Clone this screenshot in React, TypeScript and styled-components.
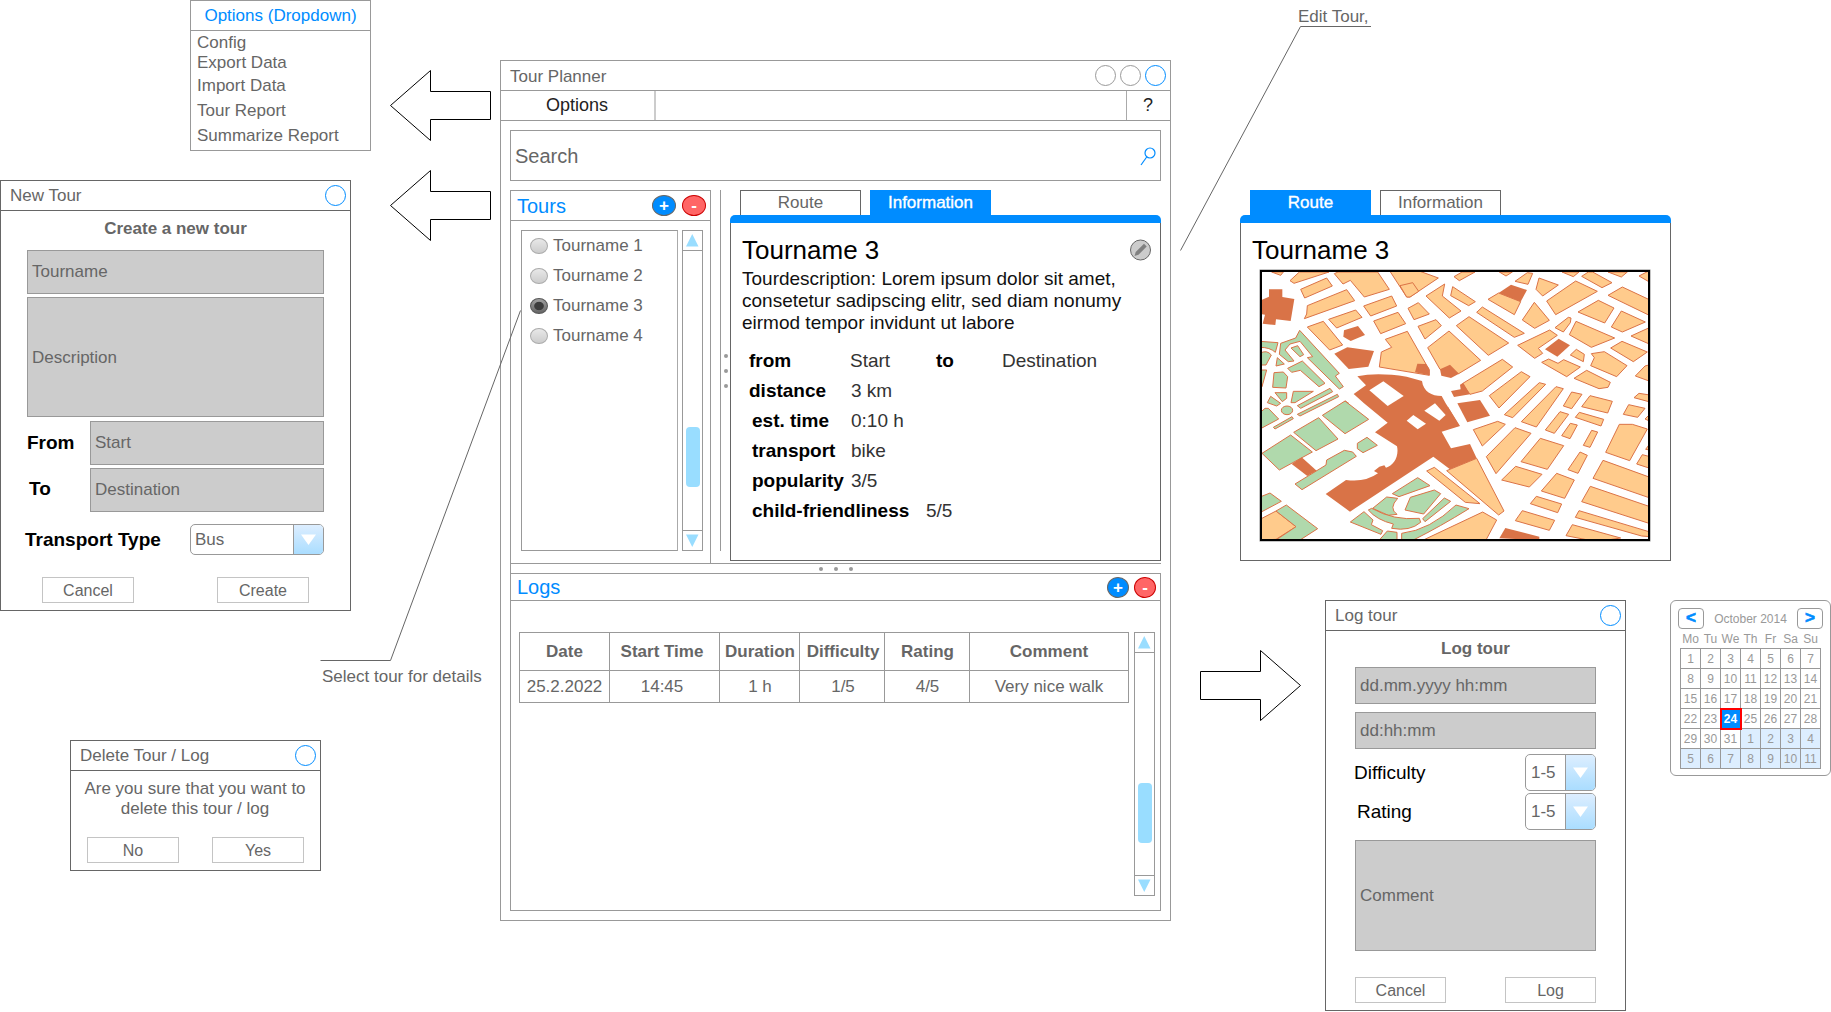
import React from "react";
import styled, { createGlobalStyle, css } from "styled-components";

const BLUE = "#008cff";
const LINE = "#999999";
const DARK = "#666666";

const GlobalStyle = createGlobalStyle`
  *, *::before, *::after { box-sizing: border-box; }
  body {
    margin: 0;
    background: #fff;
    font-family: "Liberation Sans", Arial, Helvetica, sans-serif;
    font-size: 17px;
    line-height: 20px;
    color: ${DARK};
  }
`;

const Canvas = styled.main`
  position: relative;
  width: 1831px;
  height: 1012px;
  overflow: hidden;
  background: #fff;
`;

interface PlaceProps { $x: number; $y: number; $w?: number; $h?: number }

const place = css<PlaceProps>`
  position: absolute;
  left: ${(p) => p.$x}px;
  top: ${(p) => p.$y}px;
  ${(p) => p.$w && `width: ${p.$w}px;`}
  ${(p) => p.$h && `height: ${p.$h}px;`}
`;

const Window = styled.section<PlaceProps & { $line?: string }>`
  ${place}
  display: flex;
  flex-direction: column;
  border: 1px solid ${(p) => p.$line ?? DARK};
  background: #fff;
`;

const Placed = styled.div<PlaceProps>`
  ${place}
  display: flex;
`;

const Overlay = styled.svg<PlaceProps>`
  ${place}
  pointer-events: none;
  overflow: visible;
`;

const Note = styled.span<PlaceProps>`
  ${place}
  white-space: nowrap;
`;

/* ---------- window chrome ---------- */

const TitleBar = styled.header<{ $line?: string }>`
  display: flex;
  align-items: center;
  flex: none;
  gap: 4px;
  height: 30px;
  padding: 0 4px 0 9px;
  border-bottom: 1px solid ${(p) => p.$line ?? DARK};
`;

const BarTitle = styled.span<{ $drop?: number }>`
  flex: 1;
  padding-top: ${(p) => p.$drop ?? 0}px;
`;

const Ring = styled.i<{ $color: string }>`
  width: 21px;
  height: 21px;
  border: 1px solid ${(p) => p.$color};
  border-radius: 50%;
`;

/* ---------- options menu ---------- */

const MenuHead = styled.div`
  height: 30px;
  flex: none;
  line-height: 30px;
  text-align: center;
  color: ${BLUE};
  border-bottom: 1px solid ${LINE};
`;

const MenuItem = styled.div<{ $gap: number }>`
  margin-top: ${(p) => p.$gap}px;
  padding-left: 6px;
`;

/* ---------- form parts ---------- */

const Form = styled.div<{ $side: number }>`
  display: flex;
  flex-direction: column;
  padding: 8px ${(p) => p.$side}px 0;
`;

const FormTitle = styled.h2<{ $after: number }>`
  margin: 0 0 ${(p) => p.$after}px;
  font-size: 17px;
  line-height: 20px;
  text-align: center;
`;

const Field = styled.div<{ $h: number; $after?: number; $w?: number; $drop?: number }>`
  display: flex;
  align-items: center;
  flex: none;
  width: ${(p) => (p.$w ? `${p.$w}px` : "100%")};
  height: ${(p) => p.$h}px;
  margin-bottom: ${(p) => p.$after ?? 0}px;
  padding: ${(p) => p.$drop ?? 0}px 0 0 4px;
  border: 1px solid ${LINE};
  background: #cccccc;
`;

const FormRow = styled.div<{ $after?: number; $pull?: number }>`
  display: flex;
  align-items: center;
  justify-content: space-between;
  margin: 0 0 ${(p) => p.$after ?? 0}px ${(p) => p.$pull ?? 0}px;
`;

const Label = styled.span<{ $bold?: boolean; $lift?: number }>`
  padding-bottom: ${(p) => p.$lift ?? 0}px;
  font-size: 19px;
  line-height: 22px;
  font-weight: ${(p) => (p.$bold ? 700 : 400)};
  color: #000;
`;

const SelectBox = styled.div<{ $w: number; $h: number; $pad: number }>`
  display: flex;
  align-items: center;
  justify-content: space-between;
  width: ${(p) => p.$w}px;
  height: ${(p) => p.$h}px;
  padding-left: ${(p) => p.$pad}px;
  border: 1px solid ${LINE};
  border-radius: 5px;
  overflow: hidden;
`;

const SelectText = styled.span`padding-top: 1px;`;

const SelectArrow = styled.div`
  display: flex;
  align-items: center;
  justify-content: center;
  width: 30px;
  height: 100%;
  border-left: 1px solid ${LINE};
  background: linear-gradient(#ddeeff, #aaddff);
`;

const Select = ({ text, w, h, pad }: { text: string; w: number; h: number; pad: number }) => (
  <SelectBox $w={w} $h={h} $pad={pad}>
    <SelectText>{text}</SelectText>
    <SelectArrow>
      <svg width="15" height="11" viewBox="0 0 15 11"><path d="M0 .5H15L7.5 11Z" fill="#fff" /></svg>
    </SelectArrow>
  </SelectBox>
);

const Actions = styled.div<{ $before: number; $side: number }>`
  display: flex;
  justify-content: space-between;
  margin-top: ${(p) => p.$before}px;
  padding: 0 ${(p) => p.$side}px;
`;

const Button = styled.button<{ $w?: number }>`
  width: ${(p) => p.$w ?? 92}px;
  height: 26px;
  padding: 2px 0 0;
  border: 1px solid #c4c4c4;
  background: #fff;
  color: ${DARK};
  font: 16px/22px "Liberation Sans", Arial, sans-serif;
`;

const Message = styled.p`
  margin: 8px 1px 0 0;
  text-align: center;
`;

/* ---------- main window ---------- */

const MenuBar = styled.nav`
  display: flex;
  flex: none;
  height: 30px;
  border-bottom: 1px solid ${LINE};
  font-size: 18px;
  line-height: 28px;
  color: #222;
  text-align: center;
`;
const MenuOptions = styled.div`width: 155px; padding-right: 1px; border-right: 2px solid #cccccc;`;
const MenuSpace = styled.div`flex: 1;`;
const MenuHelp = styled.div`width: 44px; padding-right: 1px; border-left: 1px solid #aaa;`;

const Body = styled.div`
  display: flex;
  flex-direction: column;
  flex: 1;
  padding: 9px;
`;

const SearchBox = styled.div`
  display: flex;
  align-items: center;
  justify-content: space-between;
  flex: none;
  height: 51px;
  margin-bottom: 9px;
  padding: 0 4px;
  border: 1px solid ${LINE};
  font-size: 20px;
`;

const Upper = styled.div`display: flex; flex: none; height: 373px;`;

const ToursPanel = styled.div`
  display: flex;
  flex-direction: column;
  width: 201px;
  margin-right: 9px;
  border: 1px solid ${LINE};
  border-bottom: 0;
`;

const PanelHead = styled.div<{ $h: number; $gap: number }>`
  display: flex;
  align-items: center;
  flex: none;
  gap: ${(p) => p.$gap}px;
  height: ${(p) => p.$h}px;
  padding: 0 4px 0 6px;
  border-bottom: 1px solid ${LINE};
`;

const PanelTitle = styled.h3`
  flex: 1;
  margin: 0;
  font-size: 20px;
  font-weight: 400;
  color: ${BLUE};
`;

const RoundButton = styled.span<{ $w: number; $danger?: boolean }>`
  display: flex;
  align-items: center;
  justify-content: center;
  width: ${(p) => p.$w}px;
  height: 21px;
  border: 1px solid ${(p) => (p.$danger ? "#cc0000" : DARK)};
  border-radius: 50%;
  background: ${(p) => (p.$danger ? "#ff6666" : BLUE)};
  color: #fff;
  font-size: 17px;
  font-weight: 700;
  line-height: 19px;
`;

const ToursBody = styled.div`display: flex; gap: 4px; padding: 9px 0 0 10px;`;

const List = styled.div`
  width: 157px;
  height: 321px;
  border: 1px solid ${LINE};
  border-right-color: #aaa;
`;

const ListItem = styled.div`
  display: flex;
  align-items: center;
  gap: 5px;
  height: 30px;
  padding-left: 8px;
`;

const Radio = styled.i<{ $on?: boolean }>`
  width: 18px;
  height: 16px;
  border: 1px solid ${(p) => (p.$on ? "#555" : "#aaa")};
  border-radius: 50%;
  background: ${(p) =>
    p.$on
      ? "radial-gradient(ellipse closest-side, #3c3c3c 0 54%, transparent 66%), linear-gradient(#a0a0a0, #666)"
      : "linear-gradient(#e8e8e8, #cccccc)"};
`;

const Scroll = styled.div<{ $h: number }>`
  display: flex;
  flex-direction: column;
  align-items: center;
  flex: none;
  width: 21px;
  height: ${(p) => p.$h}px;
  border: 1px solid ${LINE};
`;

const ScrollEnd = styled.div<{ $bottom?: boolean }>`
  display: flex;
  align-items: center;
  justify-content: center;
  flex: none;
  width: 100%;
  height: 20px;
  ${(p) => (p.$bottom ? "margin-top: auto; border-top" : "border-bottom")}: 1px solid ${LINE};
`;

const Thumb = styled.div<{ $offset: number }>`
  width: 14px;
  height: 60px;
  margin-top: ${(p) => p.$offset}px;
  border-radius: 4px;
  background: #99ddff;
`;

const Scrollbar = ({ h, offset }: { h: number; offset: number }) => (
  <Scroll $h={h}>
    <ScrollEnd><svg width="13" height="13"><path d="M0 12.5H12.5L6.25 0Z" fill="#99ddff" /></svg></ScrollEnd>
    <Thumb $offset={offset} />
    <ScrollEnd $bottom><svg width="13" height="13"><path d="M0 .5H12.5L6.25 13Z" fill="#99ddff" /></svg></ScrollEnd>
  </Scroll>
);

const VSplit = styled.div`
  display: flex;
  flex-direction: column;
  align-items: center;
  justify-content: center;
  gap: 11px;
  width: 10px;
  height: 361px;
  border-left: 1px solid ${LINE};
`;

const HSplit = styled.div`
  display: flex;
  align-items: center;
  justify-content: center;
  flex: none;
  gap: 11px;
  height: 10px;
  border: 1px solid ${LINE};
  border-width: 1px 0 0 1px;
`;

const Dot = styled.i`
  width: 4px;
  height: 4px;
  border-radius: 50%;
  background: ${LINE};
`;

/* ---------- tabs ---------- */

const TabPanel = styled.div`
  display: flex;
  flex-direction: column;
  width: 431px;
  height: 371px;
`;

const TabStrip = styled.div`
  display: flex;
  gap: 9px;
  height: 25px;
  padding-left: 10px;
`;

const Tab = styled.div<{ $active?: boolean }>`
  width: 121px;
  border: 1px solid ${(p) => (p.$active ? BLUE : DARK)};
  border-bottom: 0;
  background: ${(p) => (p.$active ? BLUE : "#fff")};
  color: ${(p) => (p.$active ? "#fff" : DARK)};
  -webkit-text-stroke: ${(p) => (p.$active ? "0.35px #fff" : "0")};
  line-height: 23px;
  text-align: center;
`;

const TabRule = styled.div`
  flex: none;
  height: 8px;
  border-radius: 5px 5px 0 0;
  background: ${BLUE};
`;

const TabBody = styled.div`
  flex: 1;
  padding: 12px 8px 0 11px;
  border: 1px solid ${DARK};
  border-top: 0;
`;

const TourHead = styled.div`
  display: flex;
  align-items: center;
  justify-content: space-between;
  height: 30px;
`;

const TourTitle = styled.h1`
  margin: 0;
  font-size: 26px;
  font-weight: 400;
  line-height: 30px;
  color: #000;
`;

const Description = styled.p`
  margin: 3px 0 12px;
  font-size: 19px;
  line-height: 22px;
  color: #111;
  white-space: nowrap;
`;

const Fact = styled.div<{ $indent: number }>`
  display: flex;
  align-items: center;
  height: 30px;
  padding-left: ${(p) => p.$indent}px;
  font-size: 19px;
`;
const FactName = styled.span<{ $w: number }>`
  width: ${(p) => p.$w}px;
  font-weight: 700;
  color: #000;
`;
const FactValue = styled.span<{ $w?: number }>`
  ${(p) => p.$w && `width: ${p.$w}px;`}
  color: #333;
`;

/* ---------- logs ---------- */

const LogsPanel = styled.div`
  display: flex;
  flex-direction: column;
  height: 338px;
  border: 1px solid ${LINE};
`;

const LogsBody = styled.div`
  display: flex;
  gap: 5px;
  padding: 31px 0 0 8px;
`;

const LogTable = styled.table`
  width: 610px;
  height: 71px;
  table-layout: fixed;
  border-collapse: collapse;
  line-height: 21px;
`;

const cell = css<{ $shift: number }>`
  padding: 0 ${(p) => Math.max(0, -p.$shift)}px 0 ${(p) => Math.max(0, p.$shift)}px;
  border: 1px solid ${LINE};
  text-align: center;
  white-space: nowrap;
`;
const HeadCell = styled.th<{ $shift: number }>`${cell} height: 38px;`;
const Cell = styled.td<{ $shift: number }>`${cell} height: 32px;`;

/* ---------- calendar ---------- */

const CalendarCard = styled.section<PlaceProps>`
  ${place}
  display: flex;
  flex-direction: column;
  align-items: center;
  padding-top: 7px;
  border: 1px solid ${LINE};
  border-radius: 6px;
  background: #fff;
  color: ${LINE};
  font-size: 12px;
`;

const CalendarHead = styled.div`
  display: flex;
  align-items: center;
  justify-content: space-between;
  width: 145px;
  height: 21px;
`;

const CalendarNav = styled.span`
  width: 26px;
  height: 21px;
  border: 1px solid ${LINE};
  border-radius: 4px;
  color: ${BLUE};
  font-size: 17px;
  font-weight: 700;
  line-height: 18px;
  text-align: center;
  -webkit-text-stroke: 0.7px ${BLUE};
`;

const WeekDays = styled.div`
  display: grid;
  grid-template-columns: repeat(7, 20px);
  margin: 0 0 -1px;
  line-height: 20px;
  text-align: center;
`;

const Days = styled.div`
  display: grid;
  grid-template-columns: repeat(7, 20px);
  grid-auto-rows: 20px;
  width: 141px;
  height: 121px;
  border: 1px solid ${LINE};
  border-width: 1px 0 0 1px;
`;

const Day = styled.span<{ $next?: boolean; $picked?: boolean }>`
  border: 1px solid ${LINE};
  border-width: 0 1px 1px 0;
  background: ${(p) => (p.$picked ? BLUE : p.$next ? "#ddeeff" : "#fff")};
  color: ${(p) => (p.$picked ? "#fff" : LINE)};
  font-weight: ${(p) => (p.$picked ? 700 : 400)};
  line-height: 20px;
  text-align: center;
  ${(p) => p.$picked && "position: relative; border-color: transparent; background-clip: padding-box; outline: 2px solid #ff0000; outline-offset: -1px;"}
`;

/* ---------- street map ---------- */

const MapFrame = styled.div`
  width: 390px;
  height: 271px;
  margin: 5px 0 0 8px;
  border: 2px solid #000;
  box-shadow: 0 0 0 0.5px #8a8a8a;
  svg { display: block; }
`;

const blocks = [
  "65,36 92,46 100,36", "120,62 148,36 237,36 132,70", "152,88 230,54 247,78 164,114",
  "172,137 290,89 314,122 163,176 170,162", "253,41 264,36 383,36 418,88 343,111 301,61 279,72",
  "236,178 317,150 336,172 260,204", "341,138 425,108 440,138 362,168", "371,183 444,157 467,191 392,221",
  "172,201 220,184 278,255 239,270", "420,34 510,34 565,54 480,111 470,111", "450,77 488,68 506,94 480,111 470,111",
  "528,108 584,72 577,108 633,153 598,174", "608,80 676,125 656,137 602,107", "474,145 505,128 538,162 492,179",
  "504,199 558,179 574,197 525,237", "619,197 657,170 776,249 715,286", "533,263 597,213 692,301 626,341 570,328",
  "406,238 472,214 538,330 538,346 388,321 394,276 425,262",
  "612,50 636,36 675,36 628,62", "748,36 768,48 787,36", "795,64 832,38 848,40 834,73", "867,54 925,75 878,108 858,88",
  "890,123 977,63 1042,94 917,164", "936,36 970,50 987,36", "995,49 1015,36 1028,36 1086,68 1056,83",
  "1074,36 1114,51 1132,36", "1167,48 1198,32 1198,66", "1074,106 1117,81 1200,120 1200,167", "984,156 1045,121 1092,144 1064,189",
  "1084,201 1114,153 1186,186 1117,216", "1143,228 1200,202 1200,253", "1082,264 1116,244 1192,276 1150,305",
  "958,224 978,184 1094,234 1024,262", "915,203 955,172 963,174 961,188 940,216", "714,118 746,99 812,125 793,164",
  "680,157 697,141 823,220 793,232", "817,180 853,127 898,181 854,205", "803,256 899,210 922,226 865,265 878,280 854,295",
  "875,307 896,297 924,310 941,299 991,321 950,350", "961,285 979,268 1003,283 1000,305",
  "1024,281 1063,275 1131,317 1100,350 1022,317 1033,293", "972,355 1010,331 1081,367 1074,382 1047,386",
  "1156,348 1185,318 1200,314 1200,364", "637,371 757,298 788,321 697,393 660,403", "718,407 814,335 840,350 747,444",
  "763,464 868,368 887,373 788,473", "814,485 918,380 940,386 859,501", "940,438 965,396 996,403 965,446",
  "995,440 1020,407 1087,424 1073,459", "1152,413 1167,400 1200,405 1200,426",
  "1120,463 1136,434 1185,445 1163,472", "1185,477 1200,462 1200,484", "976,472 988,457 1061,478 1053,498",
  "1067,577 1108,493 1147,493 1192,507 1139,602", "1160,612 1177,584 1200,590 1200,625", "1187,568 1200,550 1200,570",
  "1000,556 1025,511 1043,516 1020,562", "935,527 961,490 982,495 960,536", "886,510 930,455 956,463 913,520",
  "670,509 743,484 766,493 697,558", "709,590 795,503 843,520 738,641", "813,605 871,535 941,557 892,628",
  "954,629 990,576 1012,586 984,640", "755,660 797,619 876,643 838,681", "874,693 920,640 973,660 944,715",
  "841,731 859,709 935,732 923,758", "796,782 817,752 914,781 898,811", "1029,655 1059,601 1200,652 1200,714",
  "995,725 1021,679 1200,740 1200,791", "976,772 987,752 1200,816 1200,830 1175,828", "948,827 967,794 1112,834 1040,845",
  "590,632 680,595 762,753 746,765", "530,633 553,622 690,731 646,727", "520,840 698,756 740,780 708,840",
  "30,778 78,753 138,800 78,838 30,840",
];

const dark = [
  "57,88 97,88 97,111 133,117 122,183 78,178 76,195 38,191 45,164 30,162 30,122 57,110",
  "282,211 324,198 345,225 302,243 280,230", "253,281 292,262 372,273 355,320 296,327",
  "502,311 528,312 538,326 538,346 495,337", "570,328 600,314 627,341 603,354 574,347",
  "746,99 783,74 831,90 812,125", "885,268 926,236 960,256 922,290",
  "603,393 632,388 630,374 640,369 660,403 612,411", "622,430 690,420 720,467 652,487",
  "594,440 628,497 590,508", "125,612 155,592 200,632 172,648", "748,835 766,804 868,830 868,840",
];

const parks = [
  "149,211 268,340 256,348 280,380 268,387 172,293 188,290 150,244 120,252 105,270 132,303 115,305 88,283 92,250 137,234",
  "123,264 143,257 161,284 150,290", "113,325 157,303 225,370 207,380 151,331 125,337", "78,318 82,293 103,312",
  "30,330 50,330 36,380", "68,382 72,338 100,336 113,350 108,384", "75,398 110,398 110,415 97,425",
  "130,394 190,394 135,428 123,428", "272,435 286,423 296,430", "142,437 240,385 248,395 152,445",
  "142,463 262,403 266,410 150,468", "52,428 62,409 92,430 80,438", "30,458 45,445 55,445 86,477 30,507",
  "70,502 126,470 130,476 75,507", "36,580 122,525 187,576 88,630", "131,517 206,473 264,537 198,572",
  "217,466 285,423 356,478 285,521", "322,550 351,532 382,556 339,578 322,566",
  "135,672 228,615 230,600 283,571 308,576 319,589 156,689", "30,711 60,699 94,724 30,758",
  "78,753 109,735 203,806 150,840 78,840 138,800", "427,701 503,653 540,677 447,710",
  "465,750 481,712 553,690 572,701 521,762", "518,776 583,714 602,724 525,785", "301,786 342,755 369,780 364,794 398,812 393,823",
  "388,840 412,813 441,817 441,840",
];

const StreetMap = () => (
  <MapFrame>
    <svg width="386" height="267" viewBox="36 36 1158 801">
      <g fill="#ffcb8c" stroke="#db7347" strokeWidth="3">
        {blocks.map((p) => <polygon key={p} points={p} />)}
      </g>
      <g fill="#b0d9ac" stroke="#db7347" strokeWidth="3">
        {parks.map((p) => <polygon key={p} points={p} />)}
        <ellipse cx="111" cy="451" rx="17" ry="13" />
        <path d="M30 244 84 248 76 277Q60 262 30 262Z M30 280Q50 268 64 285L48 315 30 315Z" />
        <path d="M368 745 410 711 443 715Q415 745 441 763L415 766Z" />
        <path d="M355 750 365 745Q430 782 508 775L512 787Q480 815 425 805L430 792Q380 780 355 750Z" />
        <path d="M455 820Q540 810 618 735L657 746Q570 800 490 840H455Z" />
      </g>
      <g fill="#d97347">
        {dark.map((p) => <polygon key={p} points={p} />)}
        <path d="M322 349Q380 336 470 350L516 363C520 395 545 408 575 408L587 430 630 498 575 515 603 565 660 552 680 595 600 628 550 590 300 755 227 702 288 660Q345 668 384 640L372 633 388 620 403 616 408 623C430 618 448 590 441 559L375 517 413 488 342 430 311 402 348 376Z" />
      </g>
      <g fill="#fff">
        <polygon points="358,391 400,364 461,408 413,438" />
        <polygon points="523,452 555,430 587,465 568,482" />
        <polygon points="470,482 490,465 528,491 503,508" />
      </g>
    </svg>
  </MapFrame>
);

/* ---------- drawings ---------- */

const SearchIcon = () => (
  <svg width="16" height="20" viewBox="0 -1 16 20" fill="none" stroke={BLUE} strokeWidth="1.2">
    <circle cx="10" cy="6" r="5" /><path d="M6.7 10 1 18" />
  </svg>
);

const EditIcon = () => (
  <svg width="22" height="22" viewBox="0 0 22 22">
    <circle cx="10.5" cy="11" r="10" fill="#ccc" stroke={DARK} />
    <path d="M4.5 17 5.7 13 14 4.8 16.7 7.5 8.5 15.8Z" fill="#808080" />
  </svg>
);

const ARROW_LEFT = "M.5 35.5 40.5.5V21.5H100.5V49.5H40.5V70.5Z";
const ARROW_RIGHT = "M100.5 35.5 60.5.5V21.5H.5V49.5H60.5V70.5Z";

const BlockArrow = ({ x, y, d }: { x: number; y: number; d: string }) => (
  <Overlay $x={x} $y={y} $w={101} $h={71}><path d={d} fill="#fff" stroke="#000" /></Overlay>
);

const menu: [string, number][] = [
  ["Config", 2], ["Export Data", 0], ["Import Data", 3], ["Tour Report", 5], ["Summarize Report", 5],
];

const facts: [string, string, number, number][] = [
  ["distance", "3 km", 7, 102], ["est. time", "0:10 h", 10, 99], ["transport", "bike", 10, 99],
  ["popularity", "3/5", 10, 99], ["child-friendliness", "5/5", 10, 174],
];

interface Column { name: string; value: string; width: number; shift: number }

const columns: Column[] = [
  { name: "Date", value: "25.2.2022", width: 90, shift: 0 },
  { name: "Start Time", value: "14:45", width: 110, shift: -5 },
  { name: "Duration", value: "1 h", width: 80, shift: 1 },
  { name: "Difficulty", value: "1/5", width: 85, shift: 2 },
  { name: "Rating", value: "4/5", width: 85, shift: 1 },
  { name: "Comment", value: "Very nice walk", width: 159, shift: 0 },
];

const days = [...Array.from({ length: 31 }, (_, i) => i + 1), ...Array.from({ length: 11 }, (_, i) => i + 1)];

export default function App() {
  return (
    <Canvas>
      <GlobalStyle />

      <Window $x={190} $y={0} $w={181} $h={151} $line={LINE}>
        <MenuHead>Options (Dropdown)</MenuHead>
        {menu.map(([name, gap]) => <MenuItem key={name} $gap={gap}>{name}</MenuItem>)}
      </Window>

      <Window $x={0} $y={180} $w={351} $h={431}>
        <TitleBar><BarTitle>New Tour</BarTitle><Ring $color={BLUE} /></TitleBar>
        <Form $side={26}>
          <FormTitle $after={11}>Create a new tour</FormTitle>
          <Field $h={44} $after={3}>Tourname</Field>
          <Field $h={120} $after={4} $drop={2}>Description</Field>
          <FormRow $after={3}><Label $bold>From</Label><Field $h={44} $w={234}>Start</Field></FormRow>
          <FormRow $after={12} $pull={2}><Label $bold $lift={2}>To</Label><Field $h={44} $w={234}>Destination</Field></FormRow>
          <FormRow $pull={-2}><Label $bold>Transport Type</Label><Select text="Bus" w={134} h={31} pad={4} /></FormRow>
          <Actions $before={22} $side={15}><Button>Cancel</Button><Button>Create</Button></Actions>
        </Form>
      </Window>

      <Window $x={70} $y={740} $w={251} $h={131}>
        <TitleBar><BarTitle>Delete Tour / Log</BarTitle><Ring $color={BLUE} /></TitleBar>
        <Message>Are you sure that you want to<br />delete this tour / log</Message>
        <Actions $before={18} $side={16}><Button>No</Button><Button>Yes</Button></Actions>
      </Window>

      <Window $x={500} $y={60} $w={671} $h={861} $line={LINE}>
        <TitleBar $line={LINE}>
          <BarTitle $drop={2}>Tour Planner</BarTitle>
          <Ring $color={LINE} /><Ring $color={LINE} /><Ring $color={BLUE} />
        </TitleBar>
        <MenuBar><MenuOptions>Options</MenuOptions><MenuSpace /><MenuHelp>?</MenuHelp></MenuBar>
        <Body>
          <SearchBox><span>Search</span><SearchIcon /></SearchBox>
          <Upper>
            <ToursPanel>
              <PanelHead $h={30} $gap={6}>
                <PanelTitle>Tours</PanelTitle>
                <RoundButton $w={24}>+</RoundButton>
                <RoundButton $w={24} $danger>-</RoundButton>
              </PanelHead>
              <ToursBody>
                <List>
                  {[1, 2, 3, 4].map((n) => (
                    <ListItem key={n}><Radio $on={n === 3} />Tourname {n}</ListItem>
                  ))}
                </List>
                <Scrollbar h={321} offset={176} />
              </ToursBody>
            </ToursPanel>
            <VSplit><Dot /><Dot /><Dot /></VSplit>
            <TabPanel>
              <TabStrip><Tab>Route</Tab><Tab $active>Information</Tab></TabStrip>
              <TabRule />
              <TabBody>
                <TourHead><TourTitle>Tourname 3</TourTitle><EditIcon /></TourHead>
                <Description>
                  Tourdescription: Lorem ipsum dolor sit amet,<br />
                  consetetur sadipscing elitr, sed diam nonumy<br />
                  eirmod tempor invidunt ut labore
                </Description>
                <Fact $indent={7}>
                  <FactName $w={101}>from</FactName><FactValue $w={86}>Start</FactValue>
                  <FactName $w={66}>to</FactName><FactValue>Destination</FactValue>
                </Fact>
                {facts.map(([name, value, indent, w]) => (
                  <Fact key={name} $indent={indent}><FactName $w={w}>{name}</FactName><FactValue>{value}</FactValue></Fact>
                ))}
              </TabBody>
            </TabPanel>
          </Upper>
          <HSplit><Dot /><Dot /><Dot /></HSplit>
          <LogsPanel>
            <PanelHead $h={27} $gap={5}>
              <PanelTitle>Logs</PanelTitle>
              <RoundButton $w={22}>+</RoundButton>
              <RoundButton $w={22} $danger>-</RoundButton>
            </PanelHead>
            <LogsBody>
              <LogTable>
                <colgroup>{columns.map((c) => <col key={c.name} width={c.width} />)}</colgroup>
                <thead><tr>{columns.map((c) => <HeadCell key={c.name} $shift={c.shift}>{c.name}</HeadCell>)}</tr></thead>
                <tbody><tr>{columns.map((c) => <Cell key={c.name} $shift={c.shift}>{c.value}</Cell>)}</tr></tbody>
              </LogTable>
              <Scrollbar h={264} offset={130} />
            </LogsBody>
          </LogsPanel>
        </Body>
      </Window>

      <Placed $x={1240} $y={190}>
        <TabPanel>
          <TabStrip><Tab $active>Route</Tab><Tab>Information</Tab></TabStrip>
          <TabRule />
          <TabBody>
            <TourHead><TourTitle>Tourname 3</TourTitle></TourHead>
            <StreetMap />
          </TabBody>
        </TabPanel>
      </Placed>

      <Window $x={1325} $y={600} $w={301} $h={411}>
        <TitleBar><BarTitle>Log tour</BarTitle><Ring $color={BLUE} /></TitleBar>
        <Form $side={29}>
          <FormTitle $after={8}>Log tour</FormTitle>
          <Field $h={37} $after={8}>dd.mm.yyyy hh:mm</Field>
          <Field $h={37} $after={5}>dd:hh:mm</Field>
          <FormRow $after={2} $pull={-1}><Label>Difficulty</Label><Select text="1-5" w={71} h={37} pad={5} /></FormRow>
          <FormRow $after={10} $pull={2}><Label>Rating</Label><Select text="1-5" w={71} h={37} pad={5} /></FormRow>
          <Field $h={111}>Comment</Field>
          <Actions $before={26} $side={0}><Button $w={91}>Cancel</Button><Button $w={91}>Log</Button></Actions>
        </Form>
      </Window>

      <CalendarCard $x={1670} $y={600} $w={161} $h={176}>
        <CalendarHead><CalendarNav>&lt;</CalendarNav>October 2014<CalendarNav>&gt;</CalendarNav></CalendarHead>
        <WeekDays>{["Mo", "Tu", "We", "Th", "Fr", "Sa", "Su"].map((d) => <span key={d}>{d}</span>)}</WeekDays>
        <Days>
          {days.map((d, i) => <Day key={i} $next={i > 30} $picked={i === 23}>{d}</Day>)}
        </Days>
      </CalendarCard>

      <BlockArrow x={390} y={70} d={ARROW_LEFT} />
      <BlockArrow x={390} y={170} d={ARROW_LEFT} />
      <BlockArrow x={1200} y={650} d={ARROW_RIGHT} />

      <Overlay $x={0} $y={0} $w={1831} $h={1012} fill="none" stroke={DARK}>
        <path d="M1371 26.5H1300.5L1180.5 250.5" />
        <path d="M520.5 310.5 390.5 660.5H320.5" />
      </Overlay>
      <Note $x={1298} $y={7}>Edit Tour,</Note>
      <Note $x={322} $y={667}>Select tour for details</Note>
    </Canvas>
  );
}
